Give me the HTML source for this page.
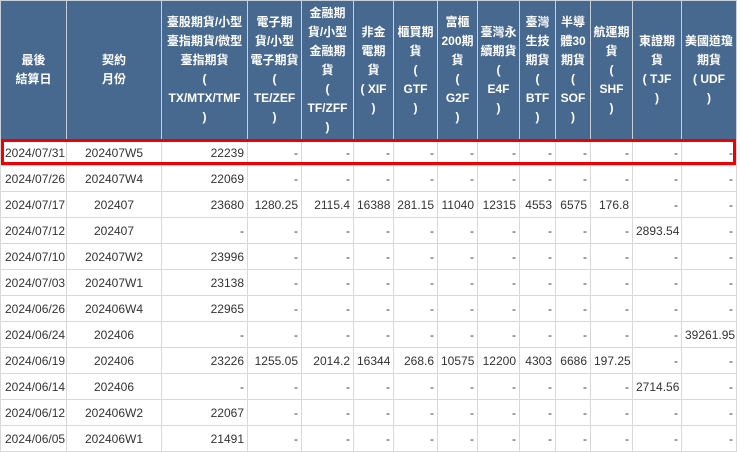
<!DOCTYPE html><html><head><meta charset="utf-8"><style>
body{margin:0;background:#fff;width:740px;height:452px;overflow:hidden;position:relative;font-family:"Liberation Sans","Noto Sans CJK TC",sans-serif}
table{border-collapse:collapse;table-layout:fixed;width:736px;position:absolute;left:0;top:0}
th{background:#48698f;color:#fff;font-size:12px;font-weight:bold;line-height:19px;height:139px;padding:0 2px;border:1px solid #c8d0da;text-align:center;vertical-align:middle;box-sizing:border-box;word-break:break-all}
td{height:26px;box-sizing:border-box;border:1px solid #d8d8d8;font-size:12px;color:#333;text-align:right;padding:0 3px;white-space:nowrap;overflow:hidden}
td.c{text-align:center}td.l{text-align:left;padding-left:4px}
.red{position:absolute;left:1px;top:139px;width:735px;height:26px;border:3px solid #e00;box-sizing:border-box}
</style></head><body>
<table>
<colgroup><col style="width:66px"><col style="width:95px"><col style="width:86px"><col style="width:54px"><col style="width:52px"><col style="width:40px"><col style="width:44px"><col style="width:40px"><col style="width:42px"><col style="width:36px"><col style="width:35px"><col style="width:42px"><col style="width:49px"><col style="width:55px"></colgroup>
<tr><th>最後<br>結算日</th><th>契約<br>月份</th><th>臺股期貨/小型臺指期貨/微型臺指期貨<br>(<br>TX/MTX/TMF<br>)</th><th>電子期貨/小型電子期貨<br>(<br>TE/ZEF<br>)</th><th>金融期貨/小型金融期貨<br>(<br>TF/ZFF<br>)</th><th>非金電期貨<br>( XIF<br>)</th><th>櫃買期貨<br>(<br>GTF<br>)</th><th>富櫃<br>200期<br>貨<br>(<br>G2F<br>)</th><th>臺灣永續期貨<br>(<br>E4F<br>)</th><th>臺灣生技期貨<br>(<br>BTF<br>)</th><th>半導體30期貨<br>(<br>SOF<br>)</th><th>航運期貨<br>(<br>SHF<br>)</th><th>東證期貨<br>( TJF<br>)</th><th>美國道瓊期貨<br>( UDF<br>)</th></tr>
<tr><td class="l">2024/07/31</td><td class="c">202407W5</td><td>22239</td><td>-</td><td>-</td><td>-</td><td>-</td><td>-</td><td>-</td><td>-</td><td>-</td><td>-</td><td>-</td><td>-</td></tr>
<tr><td class="l">2024/07/26</td><td class="c">202407W4</td><td>22069</td><td>-</td><td>-</td><td>-</td><td>-</td><td>-</td><td>-</td><td>-</td><td>-</td><td>-</td><td>-</td><td>-</td></tr>
<tr><td class="l">2024/07/17</td><td class="c">202407</td><td>23680</td><td>1280.25</td><td>2115.4</td><td>16388</td><td>281.15</td><td>11040</td><td>12315</td><td>4553</td><td>6575</td><td>176.8</td><td>-</td><td>-</td></tr>
<tr><td class="l">2024/07/12</td><td class="c">202407</td><td>-</td><td>-</td><td>-</td><td>-</td><td>-</td><td>-</td><td>-</td><td>-</td><td>-</td><td>-</td><td>2893.54</td><td>-</td></tr>
<tr><td class="l">2024/07/10</td><td class="c">202407W2</td><td>23996</td><td>-</td><td>-</td><td>-</td><td>-</td><td>-</td><td>-</td><td>-</td><td>-</td><td>-</td><td>-</td><td>-</td></tr>
<tr><td class="l">2024/07/03</td><td class="c">202407W1</td><td>23138</td><td>-</td><td>-</td><td>-</td><td>-</td><td>-</td><td>-</td><td>-</td><td>-</td><td>-</td><td>-</td><td>-</td></tr>
<tr><td class="l">2024/06/26</td><td class="c">202406W4</td><td>22965</td><td>-</td><td>-</td><td>-</td><td>-</td><td>-</td><td>-</td><td>-</td><td>-</td><td>-</td><td>-</td><td>-</td></tr>
<tr><td class="l">2024/06/24</td><td class="c">202406</td><td>-</td><td>-</td><td>-</td><td>-</td><td>-</td><td>-</td><td>-</td><td>-</td><td>-</td><td>-</td><td>-</td><td>39261.95</td></tr>
<tr><td class="l">2024/06/19</td><td class="c">202406</td><td>23226</td><td>1255.05</td><td>2014.2</td><td>16344</td><td>268.6</td><td>10575</td><td>12200</td><td>4303</td><td>6686</td><td>197.25</td><td>-</td><td>-</td></tr>
<tr><td class="l">2024/06/14</td><td class="c">202406</td><td>-</td><td>-</td><td>-</td><td>-</td><td>-</td><td>-</td><td>-</td><td>-</td><td>-</td><td>-</td><td>2714.56</td><td>-</td></tr>
<tr><td class="l">2024/06/12</td><td class="c">202406W2</td><td>22067</td><td>-</td><td>-</td><td>-</td><td>-</td><td>-</td><td>-</td><td>-</td><td>-</td><td>-</td><td>-</td><td>-</td></tr>
<tr><td class="l">2024/06/05</td><td class="c">202406W1</td><td>21491</td><td>-</td><td>-</td><td>-</td><td>-</td><td>-</td><td>-</td><td>-</td><td>-</td><td>-</td><td>-</td><td>-</td></tr>
</table>
<div class="red"></div>
</body></html>
